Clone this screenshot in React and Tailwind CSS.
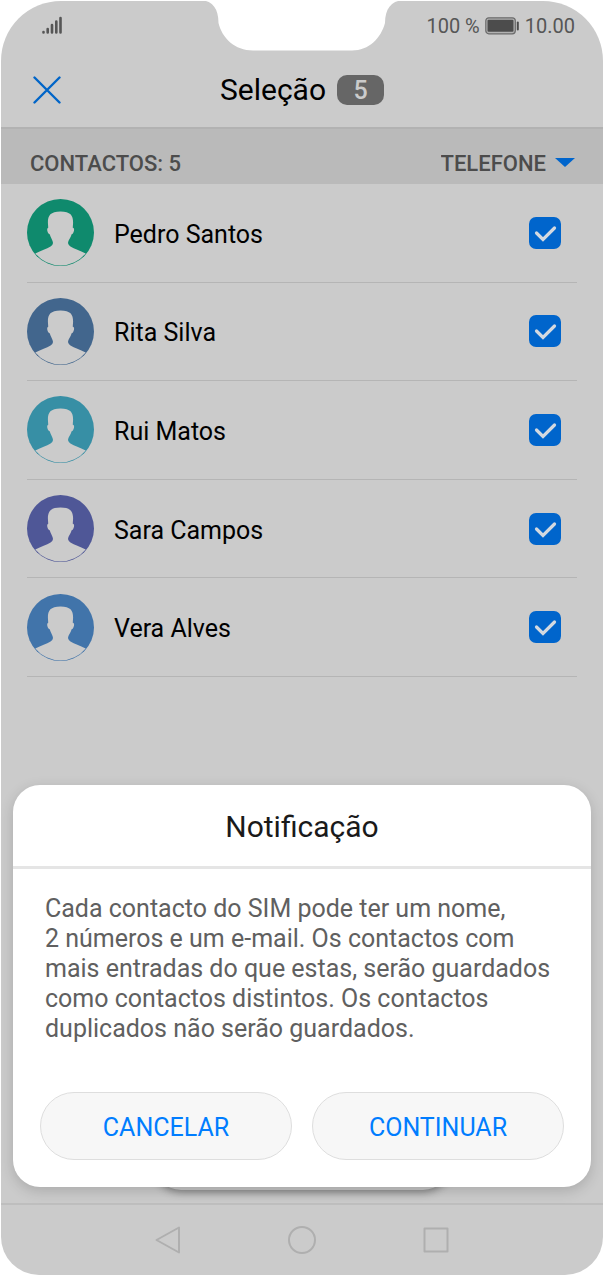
import { useState } from 'react'

const initialContacts = [
  { id: 1, name: 'Pedro Santos', color: '#0f8a6d', checked: true },
  { id: 2, name: 'Rita Silva', color: '#42668d', checked: true },
  { id: 3, name: 'Rui Matos', color: '#378fa5', checked: true },
  { id: 4, name: 'Sara Campos', color: '#4f5797', checked: true },
  { id: 5, name: 'Vera Alves', color: '#4174aa', checked: true },
]

const Avatar = ({ color }) => (
  <svg viewBox="35 28 202 202" className="size-[67px] shrink-0" aria-hidden="true">
    <circle cx="136" cy="129" r="101" fill={color} />
    <path
      d="M60 192C78 183 94 178 106 171Q113 167 113 162Q114 158 111 152L107 143Q105 140 104 135C98 133 95 124 96 119Q97 115 99 115L98 99C98 78 106 66 136 66C166 66 174 78 174 99L173 115Q176 115 177 119C177 124 175 133 169 135Q168 140 166 143L161 152Q158 158 159 162Q160 167 166 171C178 178 194 183 212 192A98 98 0 0 1 60 192Z"
      fill="#cbcbcb"
    />
  </svg>
)

const StatusBar = () => (
  <div className="flex h-[52px] items-center justify-between pr-7 pb-0.5 pl-[41px] text-[#565656]">
    <svg width="20" height="20" viewBox="0 0 20 20" stroke="currentColor" strokeWidth="2.6" strokeLinecap="round" aria-hidden="true">
      <path d="M1.5 16V16.5M5.7 13V16.5M10 9V16.5M14.3 5.5V16.5M18.5 2V16.5" />
    </svg>
    <div className="flex items-center gap-[5px] text-[20px] leading-6">
      <span>100 %</span>
      <svg width="35" height="18" viewBox="0 0 35 18" aria-hidden="true">
        <rect x="0.8" y="0.8" width="29.5" height="16" rx="3" fill="#b2b2b2" stroke="#6a6a6a" strokeWidth="1.2" />
        <rect x="2.5" y="2.8" width="26" height="12" rx="1" fill="#4c4c4c" />
        <rect x="31.8" y="4.5" width="2" height="9" rx="1" fill="#4c4c4c" />
      </svg>
      <span>10.00</span>
    </div>
  </div>
)

// Camera cut-out at the top of the display
const Notch = () => (
  <svg width="202" height="52" viewBox="0 0 202 52" className="absolute -top-px left-1/2 -translate-x-1/2" aria-hidden="true">
    <path d="M0 0C12 1 17.5 9 17.5 23C21 38 34 50.5 52 50.5H151C168 50.5 180 38 184 23C184 9 190 1 202 0Z" fill="#fff" />
  </svg>
)

const ContactRow = ({ contact, onToggle }) => (
  <li className="border-b border-[#b5b5b5]">
    <label className="flex h-full items-center pr-4">
      <Avatar color={contact.color} />
      <span className="ml-5 flex-1 pt-1 text-[25px] leading-8 text-black">{contact.name}</span>
      <span className="grid size-8 place-items-center">
        <input
          type="checkbox"
          checked={contact.checked}
          onChange={() => onToggle(contact.id)}
          className="col-start-1 row-start-1 size-8 appearance-none rounded-[7px] border-2 border-[#0065cc] checked:bg-[#0065cc]"
        />
        {contact.checked && (
          <svg viewBox="0 0 32 32" className="pointer-events-none col-start-1 row-start-1 size-8" fill="none" aria-hidden="true">
            <path d="M7.5 16L14 22.5L25.5 11" stroke="#d3d9e0" strokeWidth="3.2" strokeLinecap="round" />
          </svg>
        )}
      </span>
    </label>
  </li>
)

const NavBar = () => (
  <nav className="flex h-[72px] items-center justify-center gap-[104px] border-t-2 border-[#bebebe] text-[#afafaf]">
    <button type="button" aria-label="Voltar">
      <svg width="30" height="30" viewBox="0 0 30 30" fill="none" stroke="currentColor" strokeWidth="2" strokeLinejoin="round" aria-hidden="true">
        <path d="M3.5 15L26 2.5V27.5Z" />
      </svg>
    </button>
    <button type="button" aria-label="Início">
      <svg width="30" height="30" viewBox="0 0 30 30" fill="none" stroke="currentColor" strokeWidth="2" aria-hidden="true">
        <circle cx="15" cy="15" r="13" />
      </svg>
    </button>
    <button type="button" aria-label="Recentes">
      <svg width="30" height="30" viewBox="0 0 30 30" fill="none" stroke="currentColor" strokeWidth="2" strokeLinejoin="round" aria-hidden="true">
        <rect x="3.5" y="3.5" width="23" height="23" />
      </svg>
    </button>
  </nav>
)

const dialogButton =
  'h-[68px] flex-1 rounded-full border border-[#dedede] bg-[#f7f7f7] pt-1 text-[25px] leading-8 text-[#007dff]'

const NotificationDialog = () => (
  <div className="absolute inset-x-3 bottom-[88px]">
    <div className="absolute inset-x-[140px] -bottom-[3px] h-16 rounded-[28px] bg-[#c4c4c4] shadow-[0_2px_8px_rgba(0,0,0,0.4)]" />
    <section
      role="dialog"
      aria-labelledby="dialog-title"
      className="relative rounded-[27px] bg-white shadow-[0_4px_14px_rgba(0,0,0,0.16)]"
    >
      <h2 id="dialog-title" className="border-b-[3px] border-[#e5e5e5] pt-[22px] pb-[19px] text-center text-[30px] leading-10 text-[#1a1a1a]">
        Notificação
      </h2>
      <p className="px-8 pt-[25px] text-[25px] leading-[30px] text-[#606060]">
        Cada contacto do SIM pode ter um nome,
        <br />
        2 números e um e-mail. Os contactos com
        <br />
        mais entradas do que estas, serão guardados
        <br />
        como contactos distintos. Os contactos
        <br />
        duplicados não serão guardados.
      </p>
      <div className="flex gap-5 px-[27px] pt-12 pb-[27px]">
        <button type="button" className={dialogButton}>CANCELAR</button>
        <button type="button" className={dialogButton}>CONTINUAR</button>
      </div>
    </section>
  </div>
)

const App = () => {
  const [contacts, setContacts] = useState(initialContacts)
  const [source, setSource] = useState('TELEFONE')

  const handleToggle = (id) => {
    setContacts(contacts.map(c => (c.id === id ? { ...c, checked: !c.checked } : c)))
  }

  const selected = contacts.filter(c => c.checked).length

  return (
    <div className="flex min-h-screen bg-white p-px font-[Roboto,sans-serif]">
      <div className="relative flex flex-1 flex-col rounded-t-[60px] rounded-b-[38px] bg-[#cbcbcb]">
        <Notch />
        <StatusBar />

        <header className="grid h-[74px] grid-cols-[1fr_auto_1fr] items-center px-8">
          <button type="button" aria-label="Fechar" className="justify-self-start">
            <svg width="28" height="28" viewBox="0 0 28 28" stroke="#0065c8" strokeWidth="2.4" strokeLinecap="round" aria-hidden="true">
              <path d="M1.5 1.5L26.5 26.5M26.5 1.5L1.5 26.5" />
            </svg>
          </button>
          <h1 className="flex items-center gap-[11px] text-[30px] leading-10 text-black">
            Seleção
            <span className="w-[47px] rounded-[10px] bg-[#666] pt-0.5 text-center text-[25px] leading-7 font-medium text-[#cbcbcb]">
              {selected}
            </span>
          </h1>
        </header>

        <div className="flex h-[57px] items-end justify-between border-t-2 border-[#b2b2b2] bg-[#bababa] pr-7 pb-[5px] pl-[29px] text-[22px] leading-[30px] font-medium text-[#4c4c4c]">
          <h2>CONTACTOS: {contacts.length}</h2>
          <div className="flex items-center gap-[9px]">
            <select
              aria-label="Origem dos contactos"
              value={source}
              onChange={e => setSource(e.target.value)}
              className="appearance-none [field-sizing:content]"
            >
              <option>TELEFONE</option>
              <option>SIM</option>
            </select>
            <svg width="20" height="13" viewBox="0 0 20 13" fill="#0065cc" aria-hidden="true">
              <path d="M0 0H20L10 9Z" />
            </svg>
          </div>
        </div>

        <main className="flex-1 px-[26px]">
          <ul className="grid min-h-[493px]">
            {contacts.map(contact => (
              <ContactRow key={contact.id} contact={contact} onToggle={handleToggle} />
            ))}
          </ul>
        </main>

        <NavBar />
        <NotificationDialog />
      </div>
    </div>
  )
}

export default App
